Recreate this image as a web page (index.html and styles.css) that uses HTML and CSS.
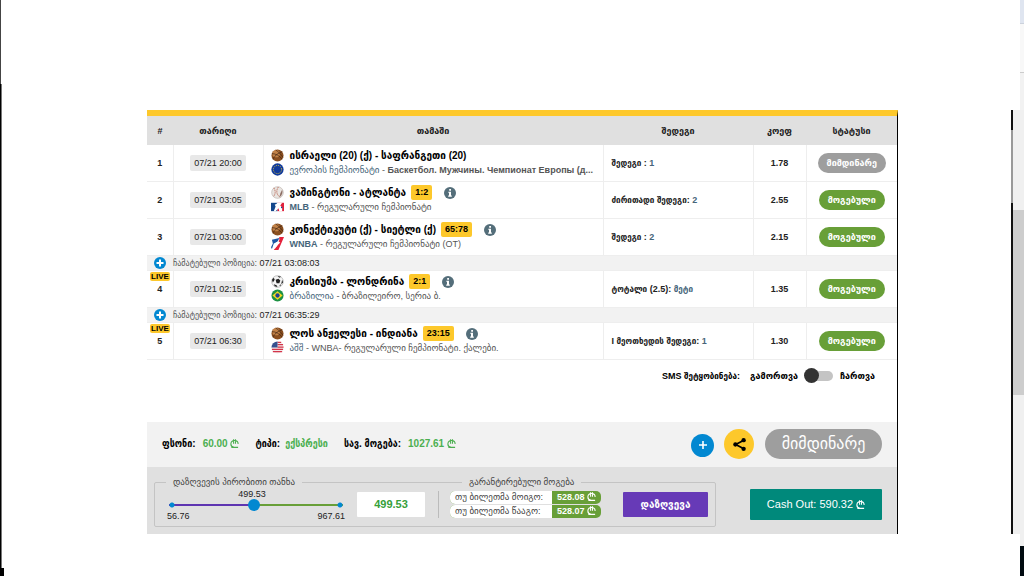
FILE: index.html
```html
<!DOCTYPE html>
<html lang="ka">
<head>
    <meta charset="UTF-8">
    <meta name="viewport" content="width=device-width, initial-scale=1.0">
    <title>ბილეთი</title>
    <link rel="stylesheet" href="styles.css">
</head>
<body>
    <svg class="defs" aria-hidden="true">
        <symbol id="i-basket" viewBox="0 0 14 14">
            <circle cx="7" cy="7" r="6.5" fill="#8a4f20"/>
            <circle cx="5.5" cy="5" r="4" fill="#d08f52" opacity=".8"/>
            <path d="M1 5c4 0 8 2 11 6M5 1c3 2 6 5 8 8M2 11c2-4 6-7 10-8" fill="none" stroke="#3a2010" stroke-width=".7"/>
        </symbol>
        <symbol id="i-baseball" viewBox="0 0 14 14">
            <circle cx="7" cy="7" r="6.3" fill="#e9e5e1" stroke="#b5aaa5" stroke-width=".6"/>
            <path d="M8 1c-3 4-2 9 2 11M3 2c2 3 2 6 0 9" fill="none" stroke="#b4533f" stroke-width=".8" stroke-dasharray="1.4 .7"/>
            <path d="M12 4c1 3 0 6-3 8l1-4z" fill="#8c6d63"/>
        </symbol>
        <symbol id="i-soccer" viewBox="0 0 14 14">
            <circle cx="7" cy="7" r="6.3" fill="#f4f4f4" stroke="#999" stroke-width=".6"/>
            <path d="M5 5l3-1 2 2-1 3H6zM1 5l2-2 1 2-2 3zM7 1l4 1-2 1zM12 5l1 3-2 2zM3 10l3 1 1 2-3-1zM9 11l2-1-1 2z" fill="#222"/>
        </symbol>
        <symbol id="i-eu" viewBox="0 0 14 14">
            <circle cx="7" cy="7" r="6.6" fill="#103a9c"/>
            <circle cx="7" cy="7" r="4.4" fill="none" stroke="#f5d327" stroke-width="1" stroke-dasharray="1 1.3"/>
        </symbol>
        <symbol id="i-mlb" viewBox="0 0 14 14">
            <rect x="0" y="3" width="7" height="9" fill="#14478c"/>
            <rect x="7" y="3" width="7" height="9" fill="#e0203c"/>
            <path d="M7 3h5l-2 3 2 2v4H9l-1-3-3 3H3l2-5-1-2 2-1z" fill="#fff"/>
            <circle cx="11.500" cy="8" r=".8" fill="#14478c"/>
        </symbol>
        <symbol id="i-wnba" viewBox="0 0 14 14">
            <path d="M9 0h5L8 14H3l4-5 1-4z" fill="#e4213b"/>
            <path d="M1 3l8-2-2 4-4 2-2 6-1-2 2-4z" fill="#1d56a5"/>
            <path d="M10 1L8 5l2 1-3 3-3 4 2-5-2-1 3-2z" fill="#fff"/>
        </symbol>
        <symbol id="i-brazil" viewBox="0 0 14 14">
            <circle cx="7" cy="7" r="6.500" fill="#1c9143"/>
            <path d="M7 2.500L12.500 7 7 11.500 1.500 7z" fill="#f6d722"/>
            <circle cx="7" cy="7" r="2.300" fill="#20408f"/>
        </symbol>
        <symbol id="i-usa" viewBox="0 0 14 14">
            <circle cx="7" cy="7" r="6.500" fill="#f3e9ea"/>
            <path d="M7 1.500h4M7 4h6M7 6.500h6.500M1 9h12M2 11.500h10" stroke="#d3344a" stroke-width="1.300"/>
            <path d="M7 .5A6.500 6.500 0 0 0 .5 7H7z" fill="#35508f"/>
        </symbol>
        <symbol id="i-info" viewBox="0 0 12 12">
            <circle cx="6" cy="6" r="6" fill="#546e7a"/>
            <path d="M5.200 2h1.800v1.700H5.200zM4.300 4.700H7v3.800h.8v1.200H4.200V8.500H5V5.800h-.7z" fill="#fff"/>
        </symbol>
        <symbol id="i-plus" viewBox="0 0 12 12">
            <circle cx="6" cy="6" r="6" fill="#0288d1"/>
            <path d="M6 2.500v7M2.500 6h7" stroke="#fff" stroke-width="2"/>
        </symbol>
        <symbol id="i-lari" viewBox="0 0 10 10">
            <path d="M9 5.600A4 3.800 0 1 0 4.500 9.200M1.500 9.300h7.500M4 .3v5M6.100 .3v5" fill="none" stroke="currentColor" stroke-width="1.200"/>
        </symbol>
    </svg>

    <div class="page">
        <div class="edge-left">
            <div class="edge-left-top"></div>
            <div class="edge-left-line"></div>
            <div class="edge-left-foot"></div>
        </div>

        <main class="main">
            <div class="ticket">
                <table class="bets">
                    <colgroup>
                        <col class="c-num"><col class="c-date"><col><col class="c-res"><col class="c-coef"><col class="c-status">
                    </colgroup>
                    <thead>
                        <tr>
                            <th>#</th>
                            <th>თარიღი</th>
                            <th>თამაში</th>
                            <th>შედეგი</th>
                            <th>კოეფ</th>
                            <th>სტატუსი</th>
                        </tr>
                    </thead>
                    <tbody>
                        <tr class="current">
                            <td class="num">1</td>
                            <td class="date"><span>07/21 20:00</span></td>
                            <td class="game">
                                <div class="teams"><svg class="ico"><use href="#i-basket"/></svg><b>ისრაელი (20) (ქ) - საფრანგეთი (20)</b></div>
                                <div class="league"><svg class="ico"><use href="#i-eu"/></svg><p><em>ევროპის ჩემპიონატი</em> - <b>Баскетбол. Мужчины. Чемпионат Европы (д...</b></p></div>
                            </td>
                            <td class="result">შედეგი : <em>1</em></td>
                            <td class="coef">1.78</td>
                            <td class="status"><span class="pill pending">მიმდინარე</span></td>
                        </tr>
                        <tr>
                            <td class="num">2</td>
                            <td class="date"><span>07/21 03:05</span></td>
                            <td class="game">
                                <div class="teams"><svg class="ico"><use href="#i-baseball"/></svg><b>ვაშინგტონი - ატლანტა</b><span class="score">1:2</span><button class="info" aria-label="ინფო"><svg><use href="#i-info"/></svg></button></div>
                                <div class="league"><svg class="ico"><use href="#i-mlb"/></svg><p><em><b>MLB</b></em> - რეგულარული ჩემპიონატი</p></div>
                            </td>
                            <td class="result">ძირითადი შედეგი: <em>2</em></td>
                            <td class="coef">2.55</td>
                            <td class="status"><span class="pill won">მოგებული</span></td>
                        </tr>
                        <tr>
                            <td class="num">3</td>
                            <td class="date"><span>07/21 03:00</span></td>
                            <td class="game">
                                <div class="teams"><svg class="ico"><use href="#i-basket"/></svg><b>კონექტიკუტი (ქ) - სიეტლი (ქ)</b><span class="score">65:78</span><button class="info" aria-label="ინფო"><svg><use href="#i-info"/></svg></button></div>
                                <div class="league"><svg class="ico"><use href="#i-wnba"/></svg><p><em><b>WNBA</b></em> - რეგულარული ჩემპიონატი (OT)</p></div>
                            </td>
                            <td class="result">შედეგი : <em>2</em></td>
                            <td class="coef">2.15</td>
                            <td class="status"><span class="pill won">მოგებული</span></td>
                        </tr>
                        <tr class="added">
                            <td colspan="6"><div><svg><use href="#i-plus"/></svg><span>ჩამატებული პოზიცია: <time>07/21 03:08:03</time></span></div></td>
                        </tr>
                        <tr>
                            <td class="num"><span class="live">LIVE</span>4</td>
                            <td class="date"><span>07/21 02:15</span></td>
                            <td class="game">
                                <div class="teams"><svg class="ico"><use href="#i-soccer"/></svg><b>კრისიუმა - ლონდრინა</b><span class="score">2:1</span><button class="info" aria-label="ინფო"><svg><use href="#i-info"/></svg></button></div>
                                <div class="league"><svg class="ico"><use href="#i-brazil"/></svg><p><em>ბრაზილია</em> - ბრაზილეირო, სერია ბ.</p></div>
                            </td>
                            <td class="result">ტოტალი (2.5): <em>მეტი</em></td>
                            <td class="coef">1.35</td>
                            <td class="status"><span class="pill won">მოგებული</span></td>
                        </tr>
                        <tr class="added">
                            <td colspan="6"><div><svg><use href="#i-plus"/></svg><span>ჩამატებული პოზიცია: <time>07/21 06:35:29</time></span></div></td>
                        </tr>
                        <tr>
                            <td class="num"><span class="live">LIVE</span>5</td>
                            <td class="date"><span>07/21 06:30</span></td>
                            <td class="game">
                                <div class="teams"><svg class="ico"><use href="#i-basket"/></svg><b>ლოს ანჟელესი - ინდიანა</b><span class="score">23:15</span><button class="info" aria-label="ინფო"><svg><use href="#i-info"/></svg></button></div>
                                <div class="league"><svg class="ico"><use href="#i-usa"/></svg><p><em>აშშ</em> - WNBA- რეგულარული ჩემპიონატი. ქალები.</p></div>
                            </td>
                            <td class="result">I მეოთხედის შედეგი: <em>1</em></td>
                            <td class="coef">1.30</td>
                            <td class="status"><span class="pill won">მოგებული</span></td>
                        </tr>
                    </tbody>
                </table>

                <div class="sms">
                    <label for="sms">SMS შეტყობინება:</label>
                    <span class="sms-off">გამორთვა</span>
                    <input type="checkbox" id="sms" class="switch">
                    <span>ჩართვა</span>
                </div>

                <div class="summary">
                    <dl>
                        <dt>ფსონი:</dt>
                        <dd>60.00 <svg class="lari"><use href="#i-lari"/></svg></dd>
                        <dt>ტიპი:</dt>
                        <dd class="type">ექსპრესი</dd>
                        <dt>სავ. მოგება:</dt>
                        <dd>1027.61 <svg class="lari"><use href="#i-lari"/></svg></dd>
                    </dl>
                    <button class="round add" aria-label="დამატება"><svg viewBox="0 0 10 10"><path d="M5 1v8M1 5h8" stroke="#fff" stroke-width="1.600"/></svg></button>
                    <button class="round share" aria-label="გაზიარება">
                        <svg viewBox="0 0 12 12"><path d="M10 2L2.500 6 10 10" fill="none" stroke="#000" stroke-width="1.600"/><circle cx="9.800" cy="2" r="2"/><circle cx="2.200" cy="6" r="2"/><circle cx="9.800" cy="10" r="2"/></svg>
                    </button>
                    <span class="state">მიმდინარე</span>
                </div>

                <div class="bottom">
                    <form class="insurance">
                        <label class="legend legend-sum" for="sum">დაზღვევის პირობითი თანხა</label>
                        <span class="legend legend-win">გარანტირებული მოგება</span>
                        <div class="slider">
                            <output for="sum">499.53</output>
                            <input type="range" id="sum" min="56.76" max="967.61" step="0.01" value="499.53">
                            <div class="limits"><span>56.76</span><span>967.61</span></div>
                        </div>
                        <input type="text" class="amount" value="499.53" aria-label="თანხა">
                        <div class="payouts">
                            <div class="payout"><span>თუ ბილეთმა მოიგო:</span><b>528.08 <svg class="lari"><use href="#i-lari"/></svg></b></div>
                            <div class="payout"><span>თუ ბილეთმა წააგო:</span><b>528.07 <svg class="lari"><use href="#i-lari"/></svg></b></div>
                        </div>
                        <button type="button" class="insure">დაზღვევა</button>
                    </form>
                    <button class="cashout">Cash Out: 590.32 <svg class="lari"><use href="#i-lari"/></svg></button>
                </div>
            </div>
        </main>

        <div class="edge-right">
            <div class="er-tab"></div>
            <div class="er-bar"></div>
            <div class="er-head"></div>
            <div class="er-scroll">
                <div class="er-thumb"></div>
            </div>
            <div class="er-foot"></div>
            <div class="er-end"></div>
        </div>
    </div>
</body>
</html>
```
FILE: styles.css
```css
* {
    box-sizing: border-box;
}
body {
    margin: 0;
    background: #fff;
    color: #222;
    font-family: "Liberation Sans", "DejaVu Sans", sans-serif;
    font-size: 9px;
    line-height: 12px;
}
button, input {
    font-family: inherit;
    padding: 0;
    border: 0;
    margin: 0;
}
button {
    cursor: pointer;
}
em {
    font-style: normal;
    color: #46657a;
}
.defs {
    display: none;
}
.page {
    display: flex;
    min-height: 100vh;
}

/* window edges */
.edge-left {
    display: flex;
    flex-direction: column;
    width: 4px;
}
.edge-left-top {
    width: 1px;
    height: 84px;
    background: #444;
}
.edge-left-line {
    flex: 1;
    width: 2px;
    background: #000;
    border-right: 1px solid #777;
}
.edge-left-foot {
    height: 8px;
    background: #000;
}
.edge-right {
    display: flex;
    flex-direction: column;
    align-items: flex-end;
    width: 13px;
}
.er-tab, .er-bar, .er-head, .er-foot, .er-end {
    width: 4px;
}
.er-tab {
    height: 24px;
    background: #dfe5f0;
    border-bottom: 1px solid #ccd2dc;
}
.er-bar {
    height: 49px;
    background: #f8f8f8;
    border-bottom: 1px solid #ccc;
}
.er-head {
    height: 37px;
    background: #f2f2f2;
}
.er-scroll {
    flex: 1;
    width: 100%;
    padding-top: 100px;
    background: #f0f0f0;
    border-left: 2px solid;
    border-image: linear-gradient(#111 0 5%, #999 5% 22%, #111 22%) 1;
}
.er-thumb {
    height: 185px;
    background: #cdcdcd;
}
.er-foot {
    height: 12px;
    background: #f0f0f0;
}
.er-end {
    height: 30px;
    background: #000a10;
}

.main {
    flex: 1;
    min-width: 0;
    padding: 110px 113px 42px 143px;
}
.ticket {
    border-top: 6px solid #fdc82b;
    border-right: 1px solid #000;
}

/* bets */
.bets {
    width: 100%;
    table-layout: fixed;
    border-collapse: collapse;
}
.c-num { width: 26px; }
.c-date { width: 90px; }
.c-res { width: 150px; }
.c-coef { width: 53px; }
.c-status { width: 91px; }
.bets th {
    height: 29px;
    padding: 0;
    background: #e0e0e0;
}
.bets td {
    height: 37px;
    padding: 0;
    border-right: 1px solid #eee;
    border-bottom: 1px solid #eee;
    text-align: center;
}
.bets .current td {
    height: 36px;
}
.bets td:last-child {
    border-right: 0;
}
.bets .num, .bets .coef {
    font-weight: bold;
}
.live {
    display: block;
    width: 20px;
    margin: -11px auto 2px 3px;
    border-radius: 2px;
    background: #fdc82b;
    color: #000;
    font-size: 8px;
    line-height: 9px;
}
.date span {
    display: inline-block;
    padding: 2px 4px;
    border-radius: 2px;
    background: #e8e8e8;
}
.bets .game {
    padding-left: 7px;
    text-align: left;
}
.teams, .league {
    display: flex;
    align-items: center;
    height: 14px;
}
.teams {
    color: #000;
    font-size: 10px;
}
.league {
    color: #555;
}
.league p {
    margin: 0;
    white-space: nowrap;
}
.ico {
    flex: none;
    width: 13px;
    height: 13px;
    margin-right: 6px;
}
.score {
    margin-left: 5px;
    padding: 0 4px;
    border-radius: 2px;
    background: #fdc82b;
    font-size: 9px;
    font-weight: bold;
    line-height: 15px;
}
.info {
    width: 12px;
    height: 12px;
    margin-left: 12px;
    background: none;
}
.info svg {
    display: block;
    width: 12px;
    height: 12px;
}
.bets .result {
    padding-left: 8px;
    text-align: left;
    font-weight: bold;
}
.result, .added, .summary dl, .sms label {
    font-family: "Liberation Sans", "DejaVu Sans Condensed", sans-serif;
}
.pill {
    display: inline-block;
    padding: 0 9px;
    border-radius: 10px;
    color: #fff;
    font-weight: bold;
    line-height: 20px;
}
.pending { background: #9e9e9e; }
.won { background: #689f38; }
.bets .added td {
    height: 15px;
    background: #f2f2f2;
}
.added div {
    display: flex;
    align-items: center;
    gap: 7px;
    height: 14px;
    padding-left: 7px;
    color: #555;
}
.added svg {
    width: 12px;
    height: 12px;
}
.added time {
    color: #222;
}

.sms {
    display: flex;
    align-items: center;
    justify-content: flex-end;
    height: 32px;
    margin-bottom: 30px;
    padding-right: 22px;
    color: #000;
    font-weight: bold;
}
.sms-off {
    margin-left: 10px;
}
.switch {
    appearance: none;
    position: relative;
    width: 28px;
    height: 10px;
    margin: 0 7px;
    border-radius: 5px;
    background: #c4c4c4;
}
.switch::before {
    content: "";
    position: absolute;
    left: -1px;
    top: -3px;
    width: 15px;
    height: 15px;
    border-radius: 50%;
    background: #333;
}
.switch:checked::before {
    left: 14px;
}

/* totals */
.lari {
    width: 9px;
    height: 9px;
    vertical-align: -1px;
}
.summary {
    display: flex;
    align-items: center;
    height: 45px;
    padding: 0 15px;
    background: #f2f2f2;
}
.summary dl {
    display: flex;
    flex: 1;
    margin: 0;
    font-size: 10px;
    font-weight: bold;
}
.summary dt {
    color: #000;
}
.summary dd {
    margin: 0 16px 0 7px;
    color: #4caf50;
}
.summary .type {
    margin-left: 5px;
}
.round {
    display: flex;
    align-items: center;
    justify-content: center;
    border-radius: 50%;
}
.add {
    width: 23px;
    height: 23px;
    margin-top: 2px;
    background: #0288d1;
}
.add svg {
    width: 10px;
    height: 10px;
}
.share {
    width: 30px;
    height: 30px;
    margin: 0 11px 0 10px;
    background: #fdc82b;
}
.share svg {
    width: 13px;
    height: 13px;
}
.state {
    width: 117px;
    border-radius: 15px;
    background: #9e9e9e;
    color: #fff;
    font-size: 16px;
    line-height: 30px;
    text-align: center;
}

/* insurance */
.bottom {
    display: flex;
    align-items: center;
    justify-content: space-between;
    height: 67px;
    padding: 8px 15px 0 7px;
    background: #e0e0e0;
}
.insurance {
    position: relative;
    display: flex;
    align-items: center;
    width: 562px;
    height: 45px;
    padding: 0 7px 0 12px;
    border: 1px solid #c4c4c4;
    border-radius: 2px;
}
.legend {
    position: absolute;
    top: -7px;
    padding: 0 7px;
    background: #e0e0e0;
    color: #444;
}
.legend-sum { left: 11px; }
.legend-win { left: 307px; }
.slider {
    width: 178px;
    padding-top: 2px;
    color: #222;
}
.slider output {
    display: block;
    padding-right: 8px;
    text-align: center;
    line-height: 10px;
}
.slider input {
    display: block;
    appearance: none;
    width: 174px;
    height: 12px;
    margin-left: 2px;
    background:
        radial-gradient(circle at 3px 6px, #0288d1 2px, transparent 3px),
        radial-gradient(circle at 171px 6px, #0288d1 2px, transparent 3px),
        linear-gradient(90deg, #5e35b1 49%, #689f38 49%) 0 5px / 100% 2px no-repeat;
}
.slider input::-webkit-slider-thumb {
    appearance: none;
    width: 12px;
    height: 12px;
    border-radius: 50%;
    background: #0288d1;
}
.limits {
    display: flex;
    justify-content: space-between;
    line-height: 10px;
}
.amount {
    width: 68px;
    height: 25px;
    margin-left: 12px;
    border-radius: 1px;
    background: #fff;
    color: #35a03a;
    font-size: 11px;
    font-weight: bold;
    text-align: center;
}
.payouts {
    display: flex;
    flex-direction: column;
    gap: 1px;
    margin-left: 13px;
    padding-left: 11px;
    border-left: 1px solid #bbb;
}
.payout {
    display: flex;
    width: 151px;
    height: 13px;
    border-radius: 5px;
    background: #689f38;
    overflow: hidden;
    line-height: 13px;
}
.payout span {
    width: 102px;
    padding-left: 5px;
    background: #fff;
    color: #444;
    white-space: nowrap;
}
.payout b {
    padding-left: 5px;
    color: #fff;
}
.insure {
    width: 85px;
    height: 25px;
    margin-left: auto;
    border-radius: 1px;
    background: #673ab7;
    color: #fff;
    font-size: 10px;
    font-weight: bold;
}
.cashout {
    width: 132px;
    height: 31px;
    border-radius: 1px;
    background: #00897b;
    color: #fff;
    font-size: 11px;
}
```
